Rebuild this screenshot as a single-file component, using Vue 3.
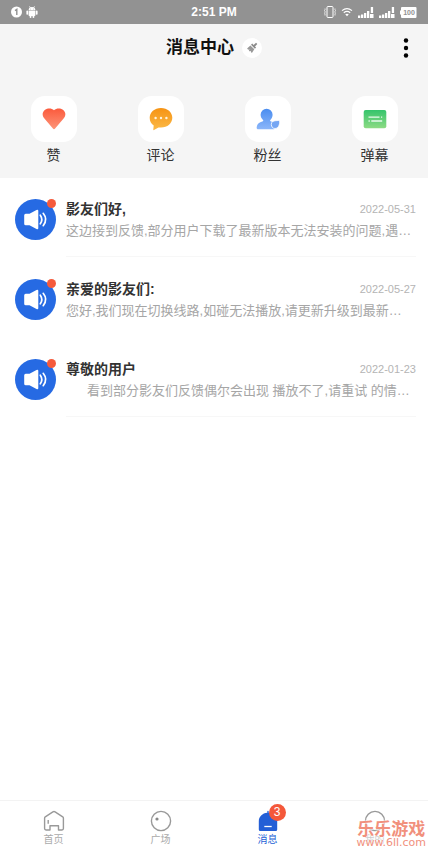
<script setup>
const shortcuts = [
  { id: 'like', label: '赞' },
  { id: 'comment', label: '评论' },
  { id: 'fans', label: '粉丝' },
  { id: 'danmu', label: '弹幕' },
]
const messages = [
  { title: '影友们好,', date: '2022-05-31', text: '这边接到反馈,部分用户下载了最新版本无法安装的问题,遇…', divider: true },
  { title: '亲爱的影友们:', date: '2022-05-27', text: '您好,我们现在切换线路,如碰无法播放,请更新升级到最新…' },
  { title: '尊敬的用户', date: '2022-01-23', text: '看到部分影友们反馈偶尔会出现 播放不了,请重试 的情…', indent: true, divider: true },
]
</script>

<template>
  <div class="page">
    <div class="status">
      <div class="status-side">
        <svg width="11" height="12" viewBox="0 0 11 12"><circle cx="5.5" cy="6" r="5.5" fill="#fff" /><path d="M4 4.6 5.8 3.4V9" fill="none" stroke="#929292" stroke-width="1.4" /></svg>
        <svg width="12" height="12" viewBox="0 0 12 12" fill="#fff"><path d="M2.6 4.3a3.4 3.4 0 0 1 6.8 0zM2.6 4.8h6.8v4.4a.8.8 0 0 1-.8.8H3.4a.8.8 0 0 1-.8-.8z" /><rect x=".4" y="4.6" width="1.7" height="4.2" rx=".8" /><rect x="9.9" y="4.6" width="1.7" height="4.2" rx=".8" /><rect x="3.7" y="9" width="1.7" height="3" rx=".8" /><rect x="6.6" y="9" width="1.7" height="3" rx=".8" /><path d="M3.4.2 4.6 2M8.6.2 7.4 2" stroke="#fff" stroke-width=".7" /><circle cx="4.5" cy="3" r=".4" fill="#929292" /><circle cx="7.5" cy="3" r=".4" fill="#929292" /></svg>
      </div>
      <div class="clock">2:51 PM</div>
      <div class="status-side right">
        <svg width="12" height="14" viewBox="0 0 12 14" fill="none" stroke="#fff"><rect x="3" y="1.5" width="6" height="11" rx="1" /><path d="M1 3.5v1.2l-.5.8.5.8v1l-.5.8.5.8v1.6M11 3.5v1.2l.5.8-.5.8v1l.5.8-.5.8v1.6" stroke-width=".8" /></svg>
        <svg width="12" height="10" viewBox="0 0 12 10" fill="none" stroke="#fff" stroke-width="1.2"><path d="M1 3.6q5-4 10 0M2.8 5.7q3.2-2.6 6.4 0" /><path d="M4.2 7.3q1.8-1.3 3.6 0L6 9.2z" fill="#fff" stroke="none" /></svg>
        <svg v-for="n in 2" :key="n" width="16" height="11" viewBox="0 0 16 11" fill="#fff"><path d="M0 8.5h2.3V11H0zM3 7.5h2.3V11H3zM6 6h2.3v5H6zM9 4h2.3v7H9zM12.8 0h2.3v6h-2.3zM12 7h3.5v4H12z" /></svg>
        <svg width="17" height="11" viewBox="0 0 17 11"><path d="M2 0h13.5q1 0 1 1v9q0 1-1 1H2q-1 0-1-1V7.5H0v-4h1V1q0-1 1-1z" fill="#fff" /><text x="9" y="8" text-anchor="middle" font-size="7" font-weight="700" fill="#929292">100</text></svg>
      </div>
    </div>

    <header class="header">
      <h1>消息中心</h1>
      <button class="clear" aria-label="清除未读">
        <svg width="12" height="12" viewBox="0 0 12 12"><path d="M10 .8 11.3 2.1 9 4.4l1.1 1.1-1.2 1.2L5 2.800l1.200-1.200 1.400 1.400z" fill="#8c8c8c" /><path d="M4.400 3.400 8.300 7.300 5.900 10.900 4.900 9.900l.2-1.200-1.200.8-1.100-1.100.8-1.200-1.400.5-1.100-1.100z" fill="#999" /></svg>
      </button>
      <button class="more" aria-label="更多">
        <svg width="6" height="20" viewBox="0 0 6 20"><circle cx="3" cy="2.5" r="2.2" /><circle cx="3" cy="10" r="2.2" /><circle cx="3" cy="17.5" r="2.2" /></svg>
      </button>
    </header>

    <nav class="shortcuts">
      <a v-for="s in shortcuts" :key="s.id" href="#" class="shortcut">
        <span class="tile">
          <svg width="24" height="24" viewBox="0 0 24 24">
            <defs>
              <linearGradient id="g-like" x2="0" y2="1"><stop stop-color="#fb5a3c" /><stop offset="1" stop-color="#fd9579" /></linearGradient>
              <linearGradient id="g-comment" x2="0" y2="1"><stop stop-color="#f69313" /><stop offset="1" stop-color="#fbba48" /></linearGradient>
              <linearGradient id="g-fans" x2="0" y2="1"><stop stop-color="#4a8df0" /><stop offset="1" stop-color="#8bb6fa" /></linearGradient>
              <linearGradient id="g-danmu" x2="0" y2="1"><stop stop-color="#35c46c" /><stop offset="1" stop-color="#8ddb84" /></linearGradient>
            </defs>
            <path v-if="s.id === 'like'" d="M12 3.2C14.5.9 18.5 1 20.9 2.8c3.2 2.5 3.1 6.1.7 8.7l-8.5 10.1q-1.1 1.2-2.2 0L2.4 11.5C0 8.9-.1 5.3 3.1 2.8 5.5 1 9.5.9 12 3.2z" fill="url(#g-like)" />
            <template v-else-if="s.id === 'comment'">
              <path d="M12 1C18.5 1 23.3 5.3 23.3 10.8S18.5 20.6 12 20.6q-1.3 0-2.5-.2L5 23.1q-.8.3-.7-.6l.4-4C2.1 16.7.7 14.2.7 10.8.7 5.3 5.5 1 12 1z" fill="url(#g-comment)" />
              <g fill="#fff3dc"><circle cx="6.6" cy="11" r="1.2" /><circle cx="12" cy="11" r="1.2" /><circle cx="17.4" cy="11" r="1.2" /></g>
            </template>
            <template v-else-if="s.id === 'fans'">
              <path d="M10.6 1.8a6 6 0 0 1 6 6c0 2.3-1 3.9-2.3 5.2-.5.8 0 1.3.8 1.6q4.7 1.6 4.7 5.3 0 2.3-2 2.3H2.5q-2.2 0-1.8-2.3C1.2 16.8 3.5 15.3 6.3 14.5c.9-.3 1.3-.8.7-1.600C5.6 11.6 4.6 10 4.6 7.8a6 6 0 0 1 6-6z" fill="url(#g-fans)" />
              <path d="M15.3 17.3c0-2.5 2-3.4 4.300-3.600q3.300-.4 4 0c.4 4.300-1.400 7.800-4.600 7.800-2.200 0-3.700-1.700-3.700-4.200z" fill="#75a6f3" stroke="#fff" stroke-width=".8" />
            </template>
            <template v-else>
              <rect x=".7" y="3" width="22.6" height="18.3" rx="2" fill="url(#g-danmu)" />
              <path d="M5.5 10.2h11M18 10.2h1.2M5.500 14h1.300M8.300 14h10.900" stroke="#e9faed" stroke-width="1.3" />
            </template>
          </svg>
        </span>
        <span>{{ s.label }}</span>
      </a>
    </nav>

    <main class="list">
      <article v-for="m in messages" :key="m.date" class="item">
        <div class="avatar">
          <svg width="41" height="41" viewBox="0 0 41 41"><circle cx="20.5" cy="20.5" r="20.5" fill="#266ae3" /><path d="M10.7 14.8h3.8l7-3.9q1.8-.8 1.8 1v17.2q0 1.8-1.8 1l-7-3.9h-3.8q-1.5 0-1.500-1.500v-8.400q0-1.500 1.500-1.500z" fill="#fff" /><path d="M25.3 16.2q3 4.3 0 8.6M28.2 14.3q5 6.2 0 12.4" fill="none" stroke="#fff" stroke-width="1.7" stroke-linecap="round" /></svg>
          <i class="dot"></i>
        </div>
        <div class="body" :class="{ divider: m.divider }">
          <div class="line"><h2>{{ m.title }}</h2><time>{{ m.date }}</time></div>
          <p :class="{ indent: m.indent }">{{ m.text }}</p>
        </div>
      </article>
    </main>

    <nav class="tabs">
      <a href="#" class="tab">
        <svg width="22" height="22" viewBox="0 0 22 22" fill="none" stroke="#999" stroke-width="1.4" stroke-linejoin="round"><path d="M1.600 8.200q0-.9.700-1.400l7.600-5q1.100-.7 2.200 0l7.600 5q.7.500.7 1.400v10.400q0 1.400-1.400 1.400h-3.500v-4.200H7V20H3q-1.400 0-1.400-1.400z" /><path d="M5.200 10v3.800" /></svg>
        <span>首页</span>
      </a>
      <a href="#" class="tab">
        <svg width="22" height="22" viewBox="0 0 22 22"><circle cx="11" cy="11" r="9.6" fill="none" stroke="#999" stroke-width="1.4" /><circle cx="7" cy="9" r="1.6" fill="#888" /></svg>
        <span>广场</span>
      </a>
      <a href="#" class="tab active">
        <span class="icon">
          <svg width="22" height="22" viewBox="0 0 22 22"><path d="M10.3 1.500q0-.8.700-.8t.7.800v1.200c4.800.3 8.500 4 8.500 8.500V19.500q0 1.500-1.500 1.500H3.300Q1.800 21 1.800 19.500v-8.300c0-4.500 3.500-8.200 8.500-8.500z" fill="#245fd6" /><path d="M7.300 16.500h7.400" stroke="#fff" stroke-width="1.3" /></svg>
          <b class="badge">3</b>
        </span>
        <span>消息</span>
      </a>
      <a href="#" class="tab">
        <svg width="22" height="22" viewBox="0 0 22 22" fill="none" stroke="#999" stroke-width="1.4"><circle cx="11" cy="11" r="9.6" /></svg>
        <span class="faint">我的</span>
      </a>
      <div class="watermark"><strong>乐乐游戏</strong><span>www.6ll.com</span></div>
    </nav>
  </div>
</template>

<style>
body {
  margin: 0;
  background: #fff;
}
</style>

<style scoped>
.page {
  display: flex;
  flex-direction: column;
  min-height: 100vh;
  font-family: "Liberation Sans", "Noto Sans CJK SC", sans-serif;
  color: #333;
}
a {
  color: inherit;
  text-decoration: none;
}
button {
  padding: 0;
  border: 0;
  background: none;
}
svg {
  display: block;
}
h1, h2, p {
  margin: 0;
}
.status {
  display: grid;
  grid-template-columns: 1fr auto 1fr;
  align-items: center;
  height: 24px;
  padding: 0 11px;
  background: #929292;
  color: #fff;
}
.status-side {
  display: flex;
  align-items: center;
  gap: 4px;
}
.right {
  justify-content: flex-end;
  gap: 5px;
}
.clock {
  font-size: 12px;
  font-weight: 700;
}
.header {
  position: relative;
  display: flex;
  align-items: center;
  justify-content: center;
  gap: 8px;
  height: 48px;
  padding: 0 20px;
  background: #f5f5f5;
}
h1 {
  font-size: 17px;
  line-height: 24px;
  font-weight: 700;
  color: #111;
}
.clear {
  display: grid;
  place-items: center;
  width: 20px;
  height: 20px;
  border-radius: 50%;
  background: #fff;
}
.more {
  position: absolute;
  right: 19px;
  top: 14px;
}
.shortcuts {
  display: grid;
  grid-template-columns: repeat(4, 1fr);
  padding: 24px 0 13px;
  background: #f5f5f5;
}
.shortcut {
  display: flex;
  flex-direction: column;
  align-items: center;
  gap: 3px;
  font-size: 14px;
  line-height: 20px;
}
.tile {
  display: grid;
  place-items: center;
  width: 46px;
  height: 46px;
  border-radius: 14px;
  background: #fff;
}
.list {
  flex: 1;
  display: flex;
  flex-direction: column;
  gap: 22px;
  padding: 21px 12px 0 15px;
}
.item {
  display: flex;
  gap: 10px;
}
.avatar {
  position: relative;
  width: 41px;
  height: 41px;
}
.dot {
  position: absolute;
  top: 0;
  right: 0;
  width: 9px;
  height: 9px;
  border-radius: 50%;
  background: #f55a3c;
}
.body {
  flex: 1;
  min-width: 0;
  padding-bottom: 13px;
  border-bottom: 1px solid transparent;
}
.divider {
  border-bottom-color: #f7f7f7;
}
.line {
  display: flex;
  align-items: center;
  justify-content: space-between;
  height: 20px;
}
h2 {
  font-size: 14px;
  line-height: 20px;
  font-weight: 700;
}
time {
  font-size: 11px;
  color: #b4b4b4;
}
p {
  overflow: hidden;
  font-size: 13px;
  line-height: 24px;
  color: #a6a6a6;
  white-space: nowrap;
  text-overflow: ellipsis;
}
.indent {
  text-indent: 21px;
}
.tabs {
  position: relative;
  display: grid;
  grid-template-columns: repeat(4, 1fr);
  height: 49px;
  border-top: 1px solid #f3f3f3;
}
.tab {
  display: flex;
  flex-direction: column;
  align-items: center;
  padding-top: 9px;
  font-size: 10px;
  line-height: 16px;
  color: #aaa;
}
.active {
  color: #245fd6;
}
.faint {
  color: #ccc;
}
.icon {
  position: relative;
}
.badge {
  position: absolute;
  top: -6px;
  left: 12px;
  width: 17px;
  height: 17px;
  border-radius: 50%;
  background: #f4583a;
  color: #fff;
  font-size: 12px;
  font-weight: 400;
  line-height: 17px;
  text-align: center;
}
.watermark {
  position: absolute;
  right: 2px;
  bottom: 2px;
  display: flex;
  flex-direction: column;
  align-items: center;
  color: #f1907c;
  font-family: "DejaVu Sans", "Noto Sans CJK SC", sans-serif;
  font-size: 11px;
  line-height: 10px;
  text-shadow: 0 0 2px #fff, 0 0 2px #fff;
}
.watermark strong {
  font-size: 17px;
  line-height: 18px;
}
</style>
